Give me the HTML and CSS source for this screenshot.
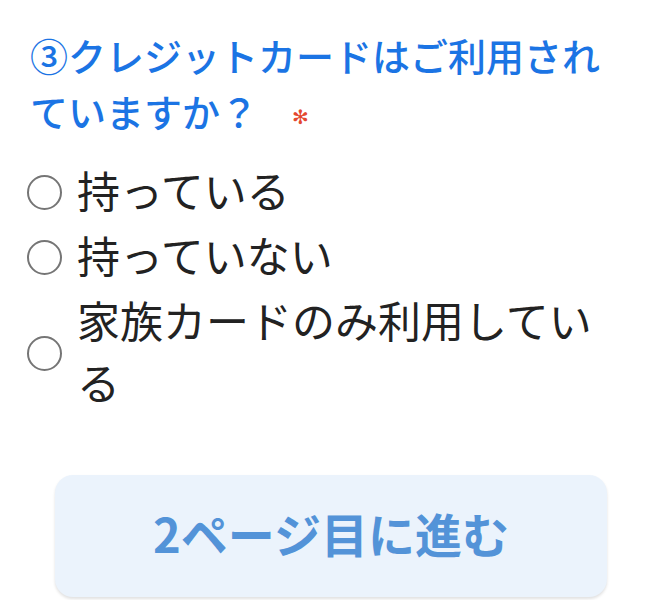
FILE: index.html
```html
<!DOCTYPE html>
<html lang="ja">
<head>
<meta charset="utf-8">
<link rel="stylesheet" href="styles.css">
</head>
<body>
<div class="page">
  <div class="question">
    <h2 class="title">③クレジットカードはご利用されていますか？<span class="req">✻</span></h2>
    <div class="options">
      <label class="option"><span class="radio"></span><span class="label">持っている</span></label>
      <label class="option"><span class="radio"></span><span class="label">持っていない</span></label>
      <label class="option"><span class="radio"></span><span class="label">家族カードのみ利用している</span></label>
    </div>
  </div>
  <div class="actions">
    <button class="next">2ページ目に進む</button>
  </div>
</div>
</body>
</html>
```
FILE: styles.css
```css
html, body {
  margin: 0;
  padding: 0;
  background: #ffffff;
}
body {
  font-family: "Noto Sans CJK JP", "Noto Sans", sans-serif;
}
.page {
  width: 662px;
  height: 600px;
  overflow: hidden;
  box-sizing: border-box;
  padding-top: 27px;
}
.question {
  padding: 0 45px 0 30px;
}
.title {
  margin: 0;
  font-size: 38px;
  line-height: 56px;
  font-weight: 500;
  color: #1b74e4;
}
.req {
  font-family: "DejaVu Sans", sans-serif;
  color: #e4482f;
  font-size: 20px;
  line-height: 1;
  font-weight: 700;
  margin-left: 34px;
  vertical-align: 3px;
}
.options {
  margin-top: 19px;
  display: flex;
  flex-direction: column;
  gap: 3px;
  margin-left: -3px;
}
.option {
  display: flex;
  align-items: center;
  gap: 15px;
}
.radio {
  flex: none;
  width: 31px;
  height: 31px;
  border: 2px solid #757575;
  border-radius: 50%;
  margin-top: 6px;
}
.label {
  font-size: 43px;
  line-height: 62px;
  color: #222222;
}
.actions {
  margin-top: 63px;
  padding: 0 55px;
}
.next {
  display: block;
  width: 100%;
  height: 122px;
  padding: 0 0 8px;
  border: none;
  border-radius: 18px;
  background: #ebf3fc;
  box-shadow: 0 2px 3px rgba(0, 0, 0, 0.12);
  font-family: "Noto Sans CJK JP", "Noto Sans", sans-serif;
  font-size: 47px;
  font-weight: 700;
  color: #5393d8;
}
```
